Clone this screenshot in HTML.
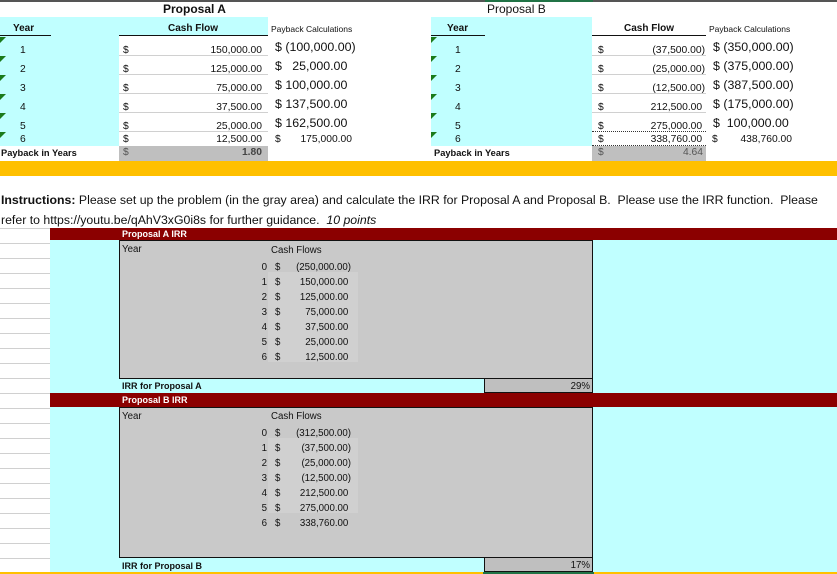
<!DOCTYPE html>
<html><head><meta charset="utf-8"><style>
*{margin:0;padding:0;box-sizing:border-box}
body{width:837px;height:574px;position:relative;overflow:hidden;background:#fff;font-family:"Liberation Sans",sans-serif;color:#111}
div{position:absolute;white-space:nowrap}
.s{font-size:9.7px}
.t{font-size:10.3px}
.b{font-weight:bold}
.cy{background:#c0ffff}
.r{text-align:right}
.big{font-size:12.4px}
.hl{height:1px;background:#d0d0d0}
.tri{width:0;height:0;border-top:6px solid #1a7a1a;border-right:6px solid transparent}
</style></head><body>
<div style="left:0;top:0;width:837px;height:2px;background:#555"></div>
<div style="left:485px;top:0;width:108px;height:2px;background:#217346"></div>

<div class="b" style="left:163px;top:2px;font-size:12px">Proposal A</div>
<div class="cy" style="left:0;top:17px;width:268px;height:19px"></div>
<div class="cy" style="left:0;top:36px;width:119px;height:110px"></div>
<div class="b" style="left:13px;top:23px;font-size:10px">Year</div>
<div style="left:0;top:35px;width:51px;height:1px;background:#111"></div>
<div class="b" style="left:168px;top:23px;font-size:10px">Cash Flow</div>
<div style="left:119px;top:35px;width:149px;height:1px;background:#111"></div>
<div style="left:271px;top:24px;font-size:8.5px">Payback Calculations</div>

<div style="left:487px;top:2px;font-size:12px">Proposal B</div>
<div class="cy" style="left:431px;top:17px;width:161px;height:129px"></div>
<div class="b" style="left:447px;top:23px;font-size:10px">Year</div>
<div style="left:431px;top:35px;width:54px;height:1px;background:#111"></div>
<div class="b" style="left:624px;top:23px;font-size:10px">Cash Flow</div>
<div style="left:592px;top:35px;width:114px;height:1px;background:#111"></div>
<div style="left:709px;top:24px;font-size:8.5px">Payback Calculations</div>

<div class="hl" style="left:119px;top:55px;width:149px"></div>
<div class="hl" style="left:119px;top:74px;width:149px"></div>
<div class="hl" style="left:119px;top:93px;width:149px"></div>
<div class="hl" style="left:119px;top:112px;width:149px"></div>
<div class="hl" style="left:119px;top:131px;width:149px"></div>
<div class="hl" style="left:592px;top:55px;width:114px"></div>
<div class="hl" style="left:592px;top:74px;width:114px"></div>
<div class="hl" style="left:592px;top:93px;width:114px"></div>
<div class="hl" style="left:592px;top:112px;width:114px"></div>
<div style="left:592px;top:131px;width:114px;border-top:1px dotted #333"></div>
<div style="left:592px;top:145px;width:114px;border-top:1px dotted #333"></div>

<div class="tri" style="left:0;top:37px"></div><div class="tri" style="left:0;top:56px"></div><div class="tri" style="left:0;top:75px"></div><div class="tri" style="left:0;top:94px"></div><div class="tri" style="left:0;top:113px"></div><div class="tri" style="left:0;top:132px"></div>
<div class="tri" style="left:431px;top:37px"></div><div class="tri" style="left:431px;top:56px"></div><div class="tri" style="left:431px;top:75px"></div><div class="tri" style="left:431px;top:94px"></div><div class="tri" style="left:431px;top:113px"></div><div class="tri" style="left:431px;top:132px"></div>

<div class="t" style="left:20px;top:41px;line-height:19px">1<br>2<br>3<br>4<br>5</div>
<div class="t" style="left:20px;top:134px">6</div>
<div class="t" style="left:123px;top:41px;line-height:19px">$<br>$<br>$<br>$<br>$</div>
<div class="t" style="left:123px;top:134px">$</div>
<div class="t r" style="left:160px;width:102px;top:41px;line-height:19px">150,000.00<br>125,000.00<br>75,000.00<br>37,500.00<br>25,000.00</div>
<div class="t r" style="left:160px;width:102px;top:134px">12,500.00</div>
<div class="big" style="left:275px;top:38px;line-height:19px">$ (100,000.00)<br>$&nbsp;&nbsp;&nbsp;25,000.00<br>$&nbsp;100,000.00<br>$&nbsp;137,500.00<br>$&nbsp;162,500.00</div>
<div class="t" style="left:275px;top:134px">$</div>
<div class="t r" style="left:280px;width:72px;top:134px">175,000.00</div>

<div class="t" style="left:455px;top:41px;line-height:19px">1<br>2<br>3<br>4<br>5</div>
<div class="t" style="left:455px;top:134px">6</div>
<div class="t" style="left:598px;top:41px;line-height:19px">$<br>$<br>$<br>$<br>$</div>
<div class="t" style="left:598px;top:134px">$</div>
<div class="t r" style="left:605px;width:100px;top:41px;line-height:19px">(37,500.00)<br>(25,000.00)<br>(12,500.00)<br>212,500.00&nbsp;<br>275,000.00&nbsp;</div>
<div class="t r" style="left:605px;width:100px;top:134px">338,760.00&nbsp;</div>
<div class="big" style="left:713px;top:38px;line-height:19px">$ (350,000.00)<br>$ (375,000.00)<br>$ (387,500.00)<br>$ (175,000.00)<br>$&nbsp;&nbsp;100,000.00</div>
<div class="t" style="left:712px;top:134px">$</div>
<div class="t r" style="left:720px;width:72px;top:134px">438,760.00</div>

<div class="b" style="left:1px;top:148px;font-size:9.3px">Payback in Years</div>
<div style="left:119px;top:146px;width:149px;height:15px;background:#bfbfbf"></div>
<div class="t" style="left:123px;top:147px;color:#555">$</div>
<div class="t b r" style="left:200px;width:62px;top:147px;color:#444">1.80</div>
<div class="b" style="left:434px;top:148px;font-size:9.3px">Payback in Years</div>
<div style="left:592px;top:146px;width:114px;height:15px;background:#bfbfbf"></div>
<div class="t" style="left:598px;top:147px;color:#555">$</div>
<div class="t r" style="left:640px;width:63px;top:147px;color:#555">4.64</div>

<div style="left:0;top:161px;width:837px;height:15px;background:#ffc000"></div>

<div style="left:1px;top:190px;font-size:12.3px;line-height:20px"><b>Instructions:</b> Please set up the problem (in the gray area) and calculate the IRR for Proposal A and Proposal B.&nbsp; Please use the IRR function.&nbsp; Please<br>refer to https://youtu.be/qAhV3xG0i8s for further guidance.&nbsp; <i>10 points</i></div>

<div class="hl" style="left:0;top:228px;width:837px"></div>
<div class="cy" style="left:50px;top:229px;width:787px;height:343px"></div>
<div class="hl" style="left:0;top:243px;width:50px"></div><div class="hl" style="left:0;top:258px;width:50px"></div><div class="hl" style="left:0;top:273px;width:50px"></div><div class="hl" style="left:0;top:288px;width:50px"></div><div class="hl" style="left:0;top:303px;width:50px"></div><div class="hl" style="left:0;top:318px;width:50px"></div><div class="hl" style="left:0;top:333px;width:50px"></div><div class="hl" style="left:0;top:348px;width:50px"></div><div class="hl" style="left:0;top:363px;width:50px"></div><div class="hl" style="left:0;top:378px;width:50px"></div><div class="hl" style="left:0;top:393px;width:50px"></div><div class="hl" style="left:0;top:408px;width:50px"></div><div class="hl" style="left:0;top:423px;width:50px"></div><div class="hl" style="left:0;top:438px;width:50px"></div><div class="hl" style="left:0;top:453px;width:50px"></div><div class="hl" style="left:0;top:468px;width:50px"></div><div class="hl" style="left:0;top:483px;width:50px"></div><div class="hl" style="left:0;top:498px;width:50px"></div><div class="hl" style="left:0;top:513px;width:50px"></div><div class="hl" style="left:0;top:528px;width:50px"></div><div class="hl" style="left:0;top:543px;width:50px"></div><div class="hl" style="left:0;top:558px;width:50px"></div>

<div style="left:50px;top:228px;width:787px;height:12px;background:#8b0000"></div>
<div class="b" style="left:122px;top:229px;color:#fff;font-size:9px">Proposal A IRR</div>
<div style="left:119px;top:240px;width:474px;height:139px;background:#c9c9c9;border:1px solid #111"></div>
<div style="left:268px;top:272px;width:90px;height:90px;background:#d0d0d0"></div>
<div class="s" style="left:122px;top:244px">Year</div>
<div class="s" style="left:271px;top:245px">Cash Flows</div>
<div class="s r" style="left:250px;width:17px;top:260px;line-height:15px">0<br>1<br>2<br>3<br>4<br>5<br>6</div>
<div class="s" style="left:275px;top:260px;line-height:15px">$<br>$<br>$<br>$<br>$<br>$<br>$</div>
<div class="s r" style="left:280px;width:71px;top:260px;line-height:15px">(250,000.00)<br>150,000.00&nbsp;<br>125,000.00&nbsp;<br>75,000.00&nbsp;<br>37,500.00&nbsp;<br>25,000.00&nbsp;<br>12,500.00&nbsp;</div>
<div class="b" style="left:122px;top:381px;font-size:9px">IRR for Proposal A</div>
<div style="left:484px;top:378px;width:109px;height:15px;background:#bfbfbf;border:1px solid #111"></div>
<div class="s r" style="left:540px;width:50px;top:381px">29%</div>

<div style="left:50px;top:393px;width:787px;height:14px;background:#8b0000"></div>
<div class="b" style="left:122px;top:395px;color:#fff;font-size:9px">Proposal B IRR</div>
<div style="left:119px;top:407px;width:474px;height:151px;background:#c9c9c9;border:1px solid #111"></div>
<div style="left:268px;top:438px;width:90px;height:75px;background:#d0d0d0"></div>
<div class="s" style="left:122px;top:411px">Year</div>
<div class="s" style="left:271px;top:411px">Cash Flows</div>
<div class="s r" style="left:250px;width:17px;top:426px;line-height:15px">0<br>1<br>2<br>3<br>4<br>5<br>6</div>
<div class="s" style="left:275px;top:426px;line-height:15px">$<br>$<br>$<br>$<br>$<br>$<br>$</div>
<div class="s r" style="left:280px;width:71px;top:426px;line-height:15px">(312,500.00)<br>(37,500.00)<br>(25,000.00)<br>(12,500.00)<br>212,500.00&nbsp;<br>275,000.00&nbsp;<br>338,760.00&nbsp;</div>
<div class="b" style="left:122px;top:561px;font-size:9px">IRR for Proposal B</div>
<div style="left:484px;top:557px;width:109px;height:15px;background:#bfbfbf;border:1px solid #111"></div>
<div class="s r" style="left:540px;width:50px;top:560px">17%</div>
<div style="left:0;top:572px;width:837px;height:2px;background:#ffc000"></div>
<div style="left:483px;top:572px;width:111px;height:2px;background:#217346"></div>
</body></html>
